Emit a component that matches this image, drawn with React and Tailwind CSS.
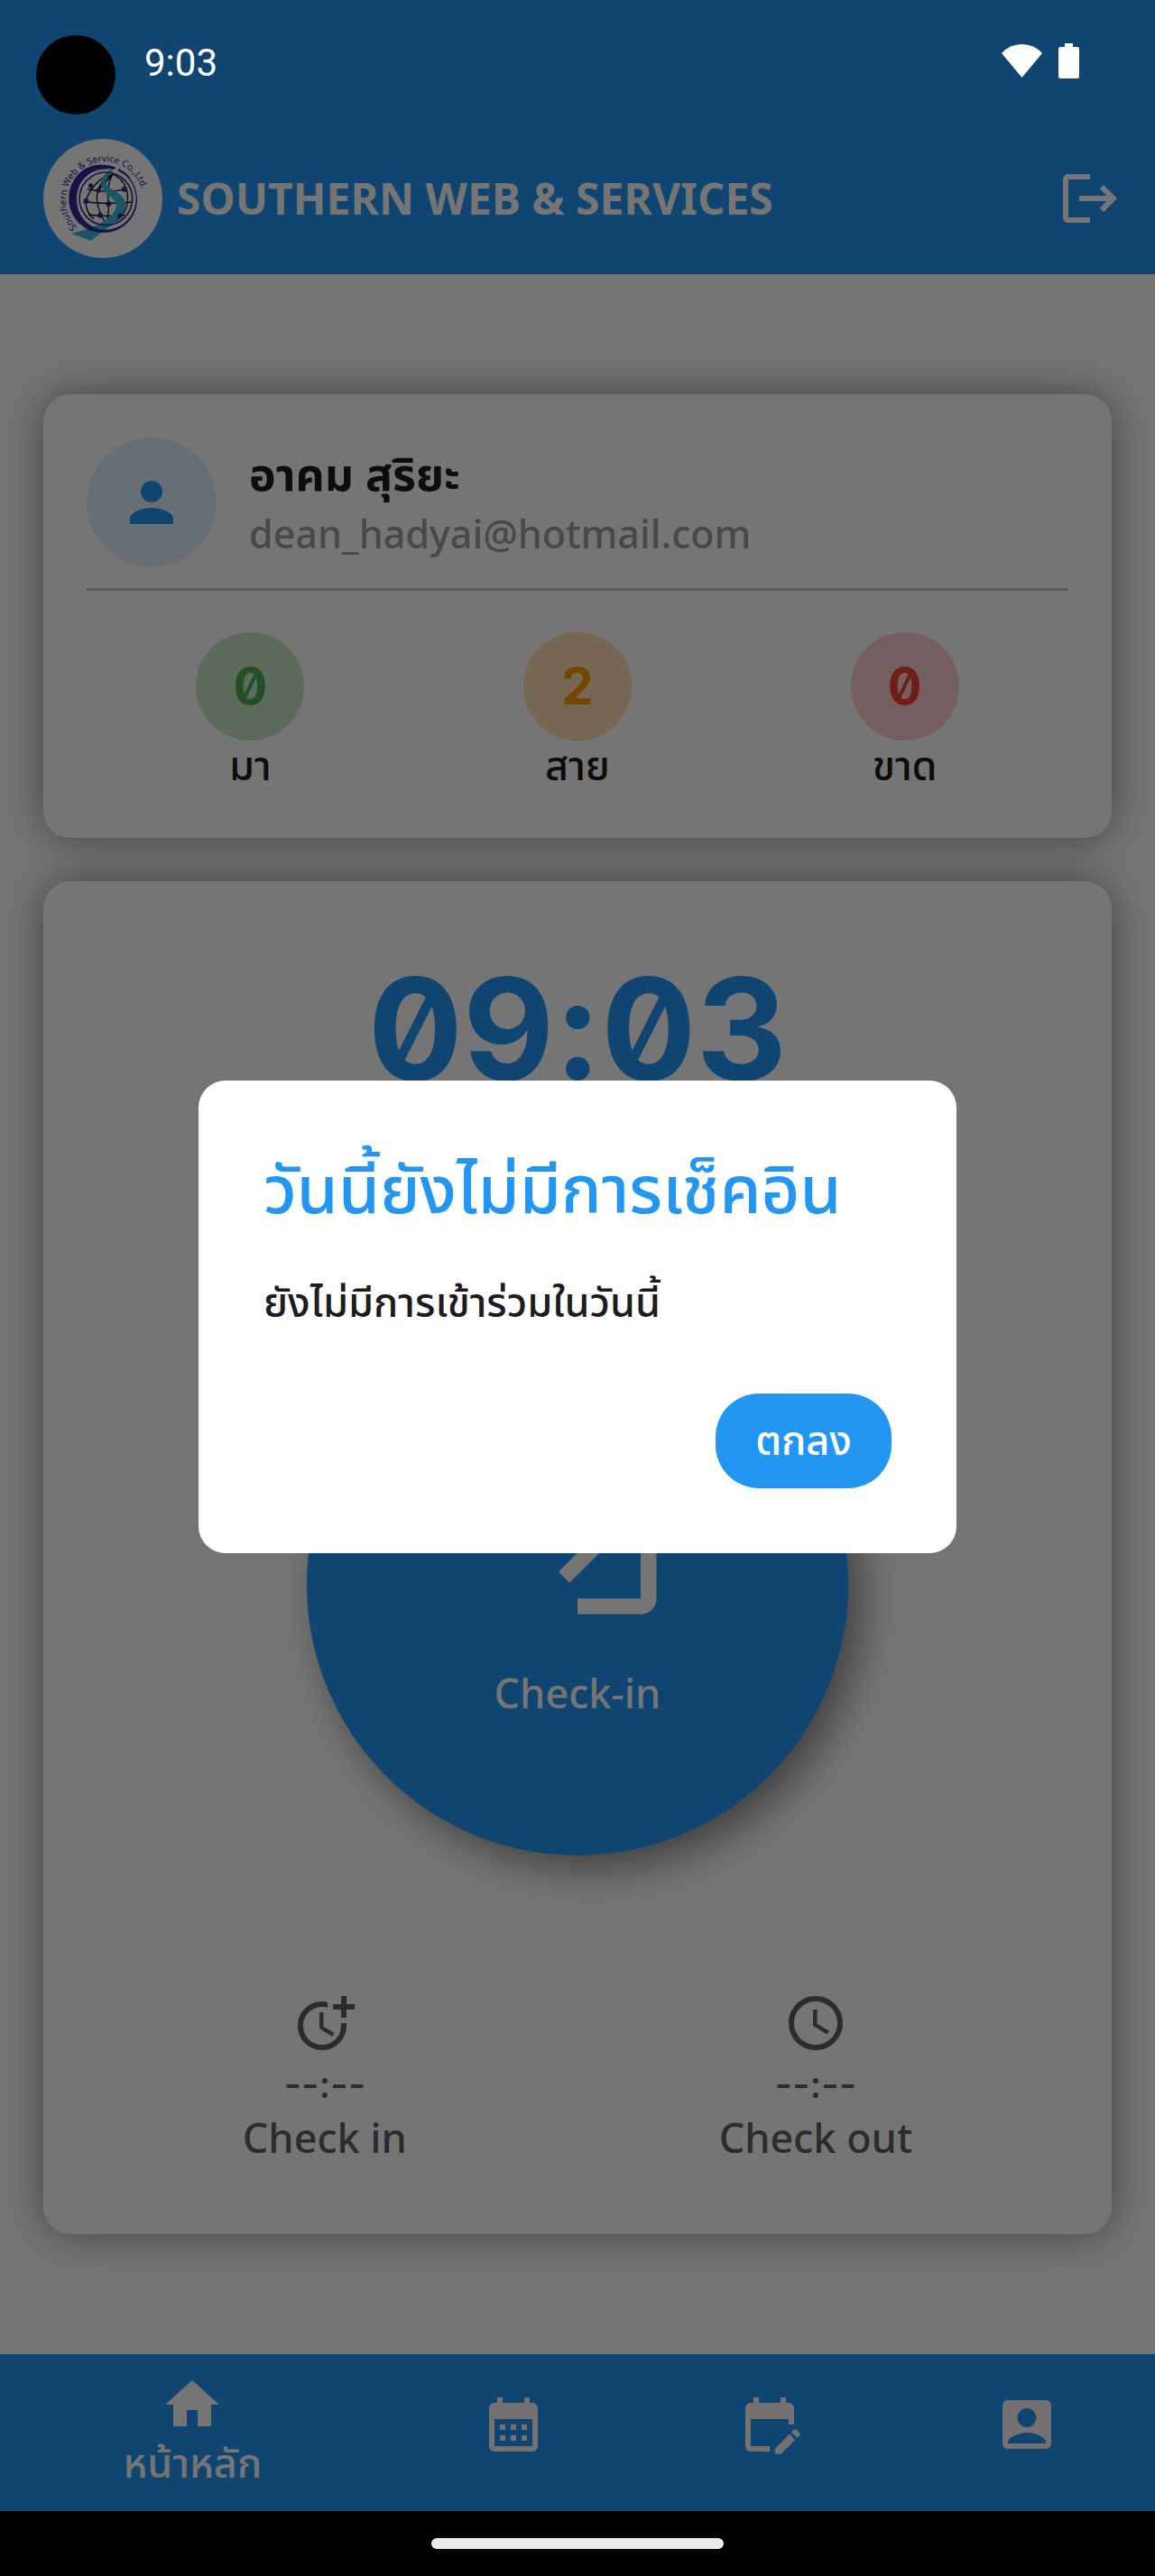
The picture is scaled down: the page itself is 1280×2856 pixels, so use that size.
import React from "react";
import {
  MdAccountBox,
  MdCalendarMonth,
  MdEditCalendar,
  MdHome,
  MdLogin,
  MdLogout,
  MdMoreTime,
  MdPerson,
  MdSchedule,
} from "react-icons/md";

function CompanyLogo() {
  return (
    <svg viewBox="54 42 396 396" className="size-[132px] shrink-0 rounded-full bg-white" role="img" aria-label="Southern Web & Service Co.,Ltd.">
      <defs>
        <path id="logo-arc" d="M166 337 A129 129 0 1 1 387 245" />
      </defs>
      <g fill="none" stroke="#111" strokeWidth="4">
        <path d="M200 208 Q265 226 330 208" />
        <path d="M190 249 Q240 262 348 252" />
        <path d="M204 294 Q265 302 326 296" />
        <path d="M272 160 Q214 190 195 249 Q196 290 222 308" />
        <path d="M280 160 Q232 190 232 240 Q234 280 262 324" />
        <path d="M284 160 Q262 200 271 258 Q272 300 262 324" />
        <path d="M284 158 Q346 190 332 262 Q322 300 290 318" />
        <path d="M286 158 L240 208" strokeWidth="6" />
      </g>
      <path
        d="M290 137 C246 158 236 192 254 214 C276 240 306 244 294 276 C278 312 222 340 145 356 L213 381 C246 350 318 312 326 268 C334 222 280 220 264 192 C258 172 278 158 290 137 Z"
        fill="#3cbbdc"
      />
      <g fill="#342a9a">
        <path fillRule="evenodd" d="M294 136 C200 104 139 170 139 241 C139 305 190 354 252 354 C318 354 366 304 366 244 C366 196 340 160 302 141 L305 147 C340 166 362 200 362 244 C360 300 316 344 262 344 C206 344 165 298 165 243 C165 184 206 132 291 143 Z" />
        <path d="M303 140 Q330 152 346 176 Q326 160 304 149 Z" />
        <circle cx="212" cy="198" r="8" />
        <circle cx="238" cy="213" r="8" />
        <circle cx="323" cy="210" r="9" />
        <circle cx="196" cy="249" r="9" />
        <circle cx="271" cy="258" r="9" />
        <circle cx="243" cy="296" r="9" />
        <circle cx="309" cy="297" r="8" />
      </g>
      <circle cx="262" cy="241" r="88" fill="none" stroke="#342a9a" strokeWidth="5" />
      <text fontSize="31" fill="#342a9a" className="font-['Noto_Sans',sans-serif]">
        <textPath href="#logo-arc">Southern Web &amp; Service Co.,Ltd.</textPath>
      </text>
    </svg>
  );
}

function StatusBar() {
  return (
    <div className="absolute inset-x-0 top-0 z-20 flex h-[136px] items-start pr-[84px] pl-10 text-white">
      <span className="mt-[39px] size-[88px] rounded-full bg-black" />
      <span className="mt-[46px] ml-8 font-[Roboto,sans-serif] text-[42px] leading-[48px]">9:03</span>
      <span className="mt-12 ml-auto flex gap-[18px]">
        <svg viewBox="0 0 45 38" className="h-[38px] w-[45px]" fill="currentColor" aria-hidden="true">
          <path d="M22.500 38 L0 11 Q9 1 22.500 1 Q36 1 45 11 Z" />
        </svg>
        <svg viewBox="0 0 23 39" className="h-[39px] w-[23px]" fill="currentColor" aria-hidden="true">
          <path d="M7 0h9v4h5q2 0 2 2v31q0 2-2 2H2q-2 0-2-2V6q0-2 2-2h5z" />
        </svg>
      </span>
    </div>
  );
}

const stats = [
  { value: "0", label: "มา", style: "bg-[#c8e6c9] text-[#4caf50]" },
  { value: "2", label: "สาย", style: "bg-[#ffe0b2] text-[#ff9800]" },
  { value: "0", label: "ขาด", style: "bg-[#ffcdd2] text-[#f44336]" },
];

function ProfileCard() {
  return (
    <section className="rounded-[30px] bg-white p-12 shadow-[0_0_48px_rgba(0,0,0,0.43)]">
      <div className="flex items-center gap-9">
        <span className="grid size-36 place-items-center rounded-full bg-[#e3f2fd] text-[#2196f3]">
          <MdPerson className="size-[72px]" />
        </span>
        <div className="pt-1">
          <h2 className="text-[50px] leading-[72px] font-bold">อาคม สุริยะ</h2>
          <p className="text-[43px] leading-[60px] font-medium text-[#9e9e9e]">dean_hadyai@hotmail.com</p>
        </div>
      </div>
      <hr className="mt-[23px] mb-[22px] border-t-3 border-[#cac4d0]" />
      <div className="grid grid-cols-3 pt-6">
        {stats.map((s) => (
          <div key={s.label} className="flex flex-col items-center">
            <span className={`grid size-[120px] place-items-center rounded-full font-[Inter,sans-serif] text-[56px] leading-[72px] font-bold slashed-zero ${s.style}`}>
              {s.value}
            </span>
            <span className="text-[45px] leading-[60px] font-medium">{s.label}</span>
          </div>
        ))}
      </div>
    </section>
  );
}

function TimeEntry({ icon: Icon, label }) {
  return (
    <div className="flex flex-col items-center text-[45px] leading-[63px] font-medium text-[#616161]">
      <Icon className="size-[72px]" />
      <span className="font-[Inter,sans-serif] text-[42px] [font-feature-settings:'calt'_0]">--:--</span>
      <span>{label}</span>
    </div>
  );
}

function CheckCard() {
  return (
    <section className="flex flex-col items-center rounded-[30px] bg-white p-12 pb-18 shadow-[0_0_48px_rgba(0,0,0,0.43)]">
      <time className="font-[Inter,sans-serif] text-[156px] leading-[232px] font-bold text-[#2196f3] [font-feature-settings:'zero','calt'_0]">
        09:03
      </time>
      <button
        type="button"
        className="mt-50 flex size-[600px] flex-col items-center justify-center gap-9 rounded-full bg-[#2196f3] text-white shadow-[15px_15px_45px_rgba(0,0,0,0.45)]"
      >
        <MdLogin className="size-[210px]" />
        <span className="text-[45px] leading-[56px] font-medium">Check-in</span>
      </button>
      <div className="mt-[150px] flex w-full justify-around">
        <TimeEntry icon={MdMoreTime} label="Check in" />
        <TimeEntry icon={MdSchedule} label="Check out" />
      </div>
    </section>
  );
}

function BottomNav() {
  return (
    <nav className="flex h-[174px] bg-[#2196f3] text-[#fff6fa]">
      <a href="#home" className="flex flex-[3] flex-col items-center justify-center text-white">
        <MdHome className="size-[72px]" />
        <span className="text-[45px] leading-[63px] font-medium">หน้าหลัก</span>
      </a>
      <a href="#calendar" aria-label="Calendar" className="flex flex-[2] justify-center pt-[42px]">
        <MdCalendarMonth className="size-[72px]" />
      </a>
      <a href="#requests" aria-label="Requests" className="flex flex-[2] justify-center pt-[42px]">
        <MdEditCalendar className="size-[72px]" />
      </a>
      <a href="#account" aria-label="Account" className="flex flex-[2] justify-center pt-[42px]">
        <MdAccountBox className="size-[72px]" />
      </a>
    </nav>
  );
}

function NoticeDialog() {
  return (
    <div className="absolute inset-0 z-10 flex items-center justify-center bg-black/54 px-20 pt-[136px] pb-[72px]">
      <div role="dialog" aria-modal="true" aria-labelledby="notice-title" className="flex w-full max-w-[840px] flex-col rounded-[30px] bg-white p-18">
        <h2 id="notice-title" className="text-[74px] leading-[105px] font-medium text-[#2196f3]">วันนี้ยังไม่มีการเช็คอิน</h2>
        <p className="mt-10 text-[45px] leading-[63px] font-medium">ยังไม่มีการเข้าร่วมในวันนี้</p>
        <button type="button" className="mt-[67px] self-end rounded-[48px] bg-[#2196f3] px-11 pt-1 text-[45px] leading-[101px] font-medium text-white">
          ตกลง
        </button>
      </div>
    </div>
  );
}

export default function App() {
  return (
    <div className="relative flex min-h-screen flex-col bg-white font-['Noto_Sans_Thai','Noto_Sans',sans-serif] text-[#1d1b20]">
      <StatusBar />
      <header className="flex items-center bg-[#2196f3] px-12 pt-[154px] pb-[18px] text-white">
        <CompanyLogo />
        <h1 className="ml-4 pt-2 text-[48px] leading-[72px] font-bold">SOUTHERN WEB &amp; SERVICES</h1>
        <button type="button" aria-label="Log out" className="-mr-3 ml-auto">
          <MdLogout className="size-[72px]" />
        </button>
      </header>
      <main className="flex flex-1 flex-col justify-center gap-12 px-12">
        <ProfileCard />
        <CheckCard />
      </main>
      <BottomNav />
      <NoticeDialog />
      <div className="relative z-20 flex h-[72px] items-center justify-center bg-black">
        <span className="h-3 w-[324px] rounded-full bg-[#ebebeb]" />
      </div>
    </div>
  );
}
